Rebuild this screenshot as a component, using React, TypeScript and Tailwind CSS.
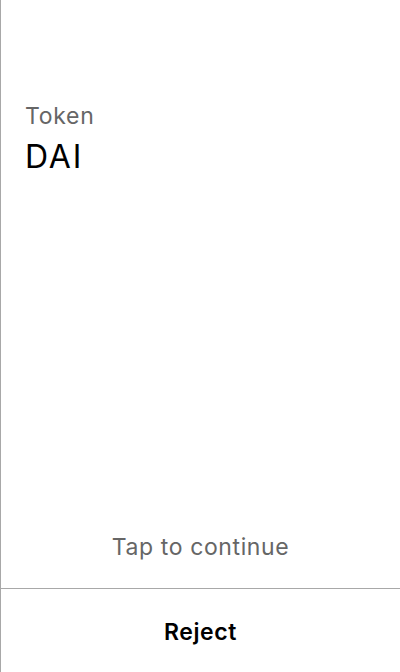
export default function App() {
  return (
    <div
      className="h-[672px] w-[400px] flex flex-col border-l border-[#a8a8a8] bg-white"
      style={{ fontFamily: 'Inter, "Noto Sans", sans-serif' }}
    >
      <div className="flex-1 flex flex-col">
        <div className="pt-[101px] px-6">
          <div className="text-[23px] leading-[30px] tracking-[0.7px] text-[#666666]">Token</div>
          <div className="mt-[7px] text-[32px] leading-[38px] tracking-[1.8px] text-black">DAI</div>
        </div>
        <div className="mt-auto pb-[26px] text-center text-[23px] leading-[30px] tracking-[0.6px] text-[#666666]">
          Tap to continue
        </div>
      </div>
      <div className="h-[84px] pt-[4px] border-t border-[#a8a8a8] flex items-center justify-center">
        <span className="text-[23px] font-semibold tracking-[0.6px] text-black">Reject</span>
      </div>
    </div>
  );
}
